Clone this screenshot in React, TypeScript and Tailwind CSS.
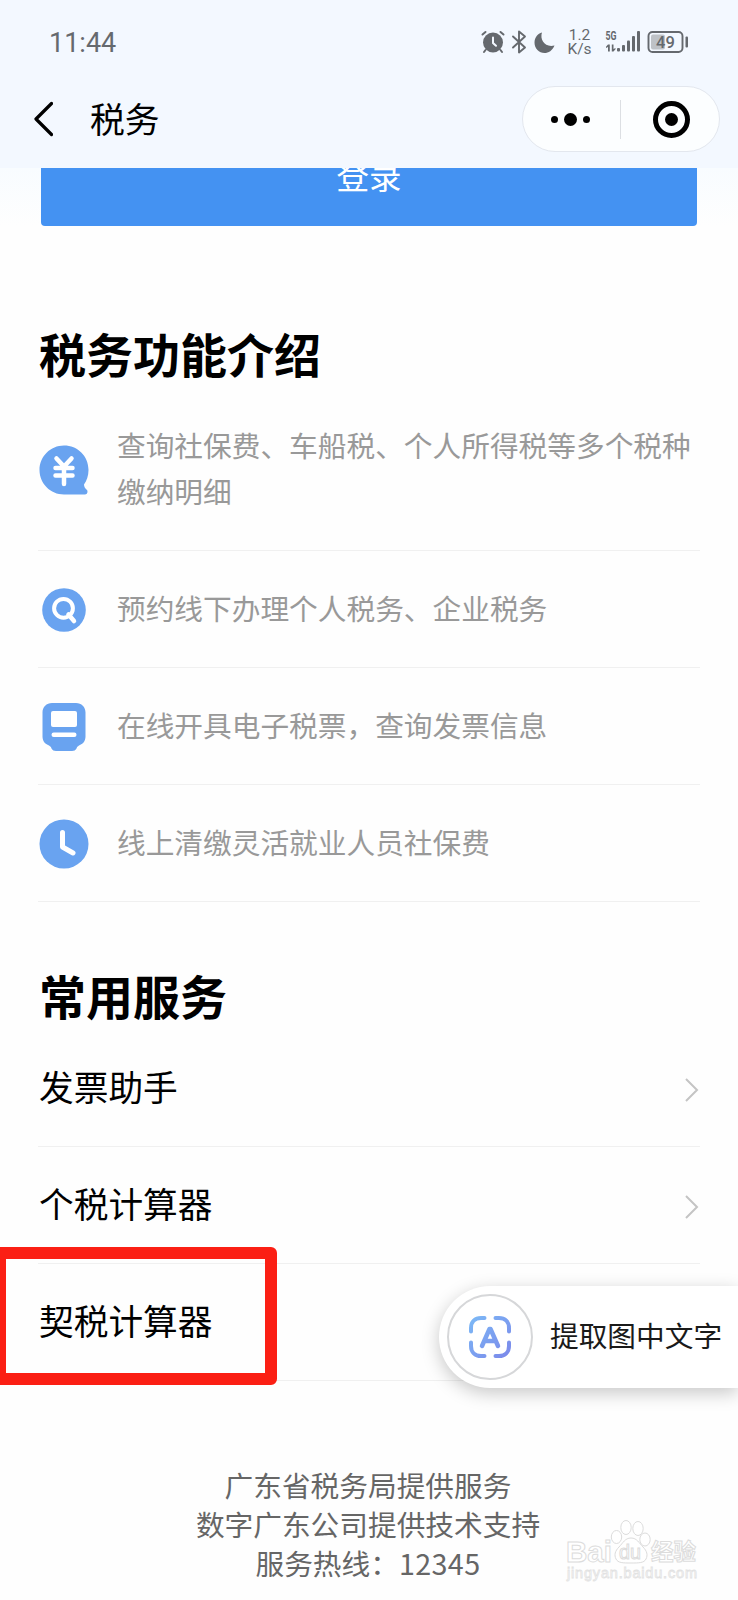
import React from 'react';

const YenIcon = () => (
    <svg width="50" height="50" viewBox="0 0 50 50" fill="none">
        <path d="M25 0.500C38.500 0.500 49.500 11 49.500 25c0 6-1.800 10.500-4.500 14.500 0 2 1 4 3 5.500 1 1.500 0.500 4.500-2 4.500H25C11.500 49.500 0.500 38.500 0.500 25S11.500 0.500 25 0.500Z" fill="#69a3f0" />
        <path d="M17.500 13.500L25 21.500l7.500-8M16.500 23h17M16.500 30.500h17M25 22v17" stroke="#fff" strokeWidth="4.500" strokeLinecap="round" />
    </svg>
);

const SearchIcon = () => (
    <svg width="50" height="50" viewBox="0 0 50 50" fill="none">
        <circle cx="25" cy="25" r="21.800" fill="#69a3f0" />
        <circle cx="24.500" cy="23.300" r="9.400" stroke="#fff" strokeWidth="4" />
        <path d="M29.500 29.500L35 36" stroke="#fff" strokeWidth="4.500" strokeLinecap="round" />
    </svg>
);

const TicketIcon = () => (
    <svg width="50" height="50" viewBox="0 0 50 50" fill="none">
        <path d="M13 1h24c5.500 0 9.500 4 9.500 9.500v24c0 4.500-2.500 7.500-6.500 9-1.500 1-2 1.500-2.500 3-.8 1.700-2.500 2.500-4.500 2.500H17c-2 0-3.700-.8-4.500-2.500-.5-1.500-1-2-2.500-3-4-1.500-6.500-4.500-6.500-9v-24C3.500 5 7.500 1 13 1Z" fill="#69a3f0" />
        <rect x="12" y="9" width="26" height="16" rx="2" fill="#fff" />
        <rect x="12.500" y="30.500" width="25" height="4.500" rx="2.200" fill="#fff" />
    </svg>
);

const ClockIcon = () => (
    <svg width="50" height="50" viewBox="0 0 50 50" fill="none">
        <circle cx="25" cy="25" r="24.500" fill="#69a3f0" />
        <path d="M23.500 13.500V28L34 34" stroke="#fff" strokeWidth="5" strokeLinecap="round" strokeLinejoin="round" />
    </svg>
);

const FEATURES = [
    { icon: <YenIcon />, text: '查询社保费、车船税、个人所得税等多个税种缴纳明细' },
    { icon: <SearchIcon />, text: '预约线下办理个人税务、企业税务' },
    { icon: <TicketIcon />, text: '在线开具电子税票，查询发票信息' },
    { icon: <ClockIcon />, text: '线上清缴灵活就业人员社保费' },
];

const SERVICES = ['发票助手', '个税计算器', '契税计算器'];

const StatusBar = () => (
    <div className="flex h-[84px] items-center justify-between pl-[49px] pr-[49px] text-[#65696e]">
        <span className="pt-[2px] font-['Roboto'] text-[27px] leading-none">11:44</span>
        <div className="flex items-center">
            <svg width="24" height="24" viewBox="0 0 24 24" fill="none" stroke="currentColor" strokeLinecap="round">
                <circle cx="12" cy="12.500" r="10" fill="currentColor" stroke="none" />
                <path d="M1.500 4.500L4.500 2M22.500 4.500L19.500 2M4.500 20L3 22M19.500 20L21 22" strokeWidth="2" />
                <path d="M12 7.500V13l3 2.800" stroke="#f3f8ff" strokeWidth="2" />
            </svg>
            <svg className="ml-[6px]" width="16" height="24" viewBox="0 0 16 24" fill="none" stroke="currentColor" strokeWidth="1.900" strokeLinejoin="round" strokeLinecap="round">
                <path d="M2 6.500L14 17.500L8 22.500V1.500L14 6.500L2 17.500" />
            </svg>
            <svg className="ml-[7px]" width="21" height="23" viewBox="0 0 21 23" fill="currentColor">
                <path d="M8 1.500C5.500 8.500 11 17 20.500 14.500C18.500 19.500 14.500 22 10.500 22C5 22 0.500 17.500 0.500 11.800C0.500 6.500 3.800 2.500 8 1.500Z" />
            </svg>
            <div className="ml-[12px] mr-px flex w-[25px] flex-col items-center font-['Roboto'] text-[15.500px] leading-[14.500px]">
                <span>1.2</span>
                <span>K/s</span>
            </div>
            <svg className="ml-[12px]" width="36" height="24" viewBox="0 0 36 24" fill="currentColor">
                <text x="0.500" y="9.500" fontFamily="Roboto" fontWeight="700" fontSize="12" textLength="11" lengthAdjust="spacingAndGlyphs">5G</text>
                <path d="M3 14.500h1.800v7H3v-4.500l-2 1v-1.300ZM6.800 14.500h1.700v4.500l2-1v1.300l-2 2.200H6.800Z" />
                <rect x="12" y="18" width="3" height="3.500" rx="1" />
                <rect x="17" y="15" width="3" height="6.500" rx="1" />
                <rect x="22" y="10.500" width="3" height="11" rx="1" />
                <rect x="27" y="6" width="3" height="15.500" rx="1" />
                <rect x="32" y="1" width="3" height="20.500" rx="1" />
            </svg>
            <svg className="ml-[6px]" width="42" height="24" viewBox="0 0 42 24" fill="none">
                <rect x="1.500" y="2" width="34" height="20" rx="4" stroke="currentColor" strokeWidth="1.900" />
                <rect x="4" y="4.500" width="14" height="15" rx="2" fill="#bec2c7" />
                <rect x="38.500" y="6.500" width="2.500" height="11" rx="1" fill="currentColor" />
                <text x="9" y="17.500" fontFamily="Roboto" fontWeight="500" fontSize="16.500" fill="currentColor">49</text>
            </svg>
        </div>
    </div>
);

const NavBar = () => (
    <div className="flex h-[84px] items-start pl-[33px] pr-[18px]">
        <svg className="mt-[17px]" width="20" height="36" viewBox="0 0 20 36" fill="none">
            <path d="M18.500 2.500L3 18L18.500 33.500" stroke="#000" strokeWidth="3.200" strokeLinecap="round" strokeLinejoin="round" />
        </svg>
        <h1 className="ml-[37px] mt-[9px] text-[34.800px] leading-[50px] text-black">税务</h1>
        <div className="ml-auto mt-[2px] flex h-[66px] w-[198px] items-center rounded-full border border-[#e3e7ee] bg-[#fcfeff]">
            <button className="flex w-[97px] items-center justify-center gap-[6px] pr-[2px]">
                <span className="h-[7px] w-[7px] rounded-full bg-black"></span>
                <span className="h-[13px] w-[13px] rounded-full bg-black"></span>
                <span className="h-[7px] w-[7px] rounded-full bg-black"></span>
            </button>
            <span className="h-[39px] w-px bg-[#dcdfe3]"></span>
            <button className="flex flex-1 items-center justify-center pl-[3px]">
                <span className="flex h-[37px] w-[37px] items-center justify-center rounded-full border-[5px] border-black">
                    <span className="h-[13px] w-[13px] rounded-full bg-black"></span>
                </span>
            </button>
        </div>
    </div>
);

const ExtractTextPill = () => (
    <div className="absolute right-0 top-[1286px] flex h-[102px] w-[299px] items-center rounded-l-full bg-white pl-[8px] shadow-[0_5px_18px_rgba(0,0,0,0.22)]">
        <div className="flex h-[86px] w-[86px] items-center justify-center rounded-full border-2 border-[#d6d7d9]">
            <svg width="44" height="44" viewBox="0 0 44 44" fill="none" stroke="url(#scan)" strokeWidth="4" strokeLinecap="round" strokeLinejoin="round">
                <defs>
                    <linearGradient id="scan" x1="2" y1="2" x2="42" y2="42" gradientUnits="userSpaceOnUse">
                        <stop stopColor="#7cb9f6" />
                        <stop offset="1" stopColor="#7b88ea" />
                    </linearGradient>
                </defs>
                <path d="M3 16.500V13C3 7 7 3 13 3h3.500M27.500 3H31c6 0 10 4 10 10v3.500M41 27.500V31c0 6-4 10-10 10h-3.500M16.500 41H13C7 41 3 37 3 31v-3.500" />
                <path d="M14 31L21.500 14h1L30 31M17.500 26h9" strokeWidth="4.500" />
            </svg>
        </div>
        <span className="-mt-[4px] ml-[17px] whitespace-nowrap text-[28.700px] leading-[40px] text-[#1a1a1a]">提取图中文字</span>
    </div>
);

const Watermark = () => (
    <div className="absolute left-[565px] top-[1518px]">
        <svg width="136" height="68" viewBox="0 0 136 68" fill="#fff" stroke="#dcdcdc" strokeWidth="1">
            <text x="1" y="44" fontFamily="Liberation Sans" fontWeight="700" fontSize="30" textLength="46" lengthAdjust="spacingAndGlyphs">Bai</text>
            <ellipse cx="51.500" cy="19" rx="5.200" ry="6.500" />
            <ellipse cx="61" cy="9.500" rx="5.200" ry="7" />
            <ellipse cx="73" cy="10.500" rx="5.200" ry="7" />
            <ellipse cx="80" cy="21.500" rx="5.200" ry="6.500" />
            <path d="M66 20c6 0 8 5 12 9 4 4 5 8 3 12-2 4-7 4-15 4s-13 0-15-4c-2-4-1-8 3-12 4-4 6-9 12-9Z" />
            <text x="54" y="41" fontFamily="Liberation Sans" fontSize="20" textLength="22" lengthAdjust="spacingAndGlyphs">du</text>
            <text x="86" y="42" fontFamily="Noto Sans CJK SC" fontWeight="700" fontSize="22.500">经验</text>
            <text x="2" y="60" fontFamily="Liberation Sans" fontSize="14.500" stroke="#e2e2e2" strokeWidth="0.800" textLength="130">jingyan.baidu.com</text>
        </svg>
    </div>
);

const App: React.FC = () => {
    return (
        <div className="relative h-[1600px] w-[738px] overflow-hidden bg-[#fefefe] font-['Noto_Sans_CJK_SC',sans-serif]">
            <header className="h-[168px] bg-[#f3f8ff]">
                <StatusBar />
                <NavBar />
            </header>

            <main>
                <div className="h-[58px] bg-linear-to-b from-[#f8fcff] to-[#fefefe] px-[41px]">
                    <button className="flex h-[58px] w-full justify-center overflow-hidden rounded-b-[4px] bg-[#4492f2] text-[32.500px] leading-[48px] text-white">
                        <span className="-mt-[17px]">登录</span>
                    </button>
                </div>

                <section className="px-[38px] pt-[92px]">
                    <h2 className="h-[70px] pl-px text-[47px] font-bold leading-[70px] text-black">税务功能介绍</h2>
                    <ul>
                        {FEATURES.map((item) => (
                            <li key={item.text} className="flex items-center border-b border-[#f0f0f0] pb-[36px] pt-[34px]">
                                <div className="-mb-[12px] -mt-[8px] shrink-0 pl-[0.500px]">{item.icon}</div>
                                <p className="-mr-4 ml-[28.500px] text-[28.700px] leading-[46px] text-[#999999]">{item.text}</p>
                            </li>
                        ))}
                    </ul>
                </section>

                <section className="px-[38px] pt-[58px]">
                    <h2 className="h-[70px] pl-px text-[47px] font-bold leading-[70px] text-black">常用服务</h2>
                    <ul>
                        {SERVICES.map((name) => (
                            <li key={name} className="flex h-[117px] items-center justify-between border-b border-[#f0f0f0]">
                                <span className="-mt-[4px] pl-px text-[34.700px] leading-[50px] text-black">{name}</span>
                                <svg className="mr-px mt-[4px]" width="16" height="26" viewBox="0 0 16 26" fill="none">
                                    <path d="M3 2L14 13L3 24" stroke="#c4c4c4" strokeWidth="2" />
                                </svg>
                            </li>
                        ))}
                    </ul>
                </section>

                <footer className="pr-[2px] pt-[84px] text-center text-[28.700px] leading-[39px] text-[#666666]">
                    <p>广东省税务局提供服务</p>
                    <p>数字广东公司提供技术支持</p>
                    <p>服务热线：<span className="tracking-[0.4px]">12345</span></p>
                </footer>
            </main>

            <div className="absolute -left-[6px] top-[1247px] h-[138px] w-[283px] rounded-[6px] border-[12px] border-[#fb1f14]"></div>
            <ExtractTextPill />
            <Watermark />
        </div>
    );
};

export default App;
